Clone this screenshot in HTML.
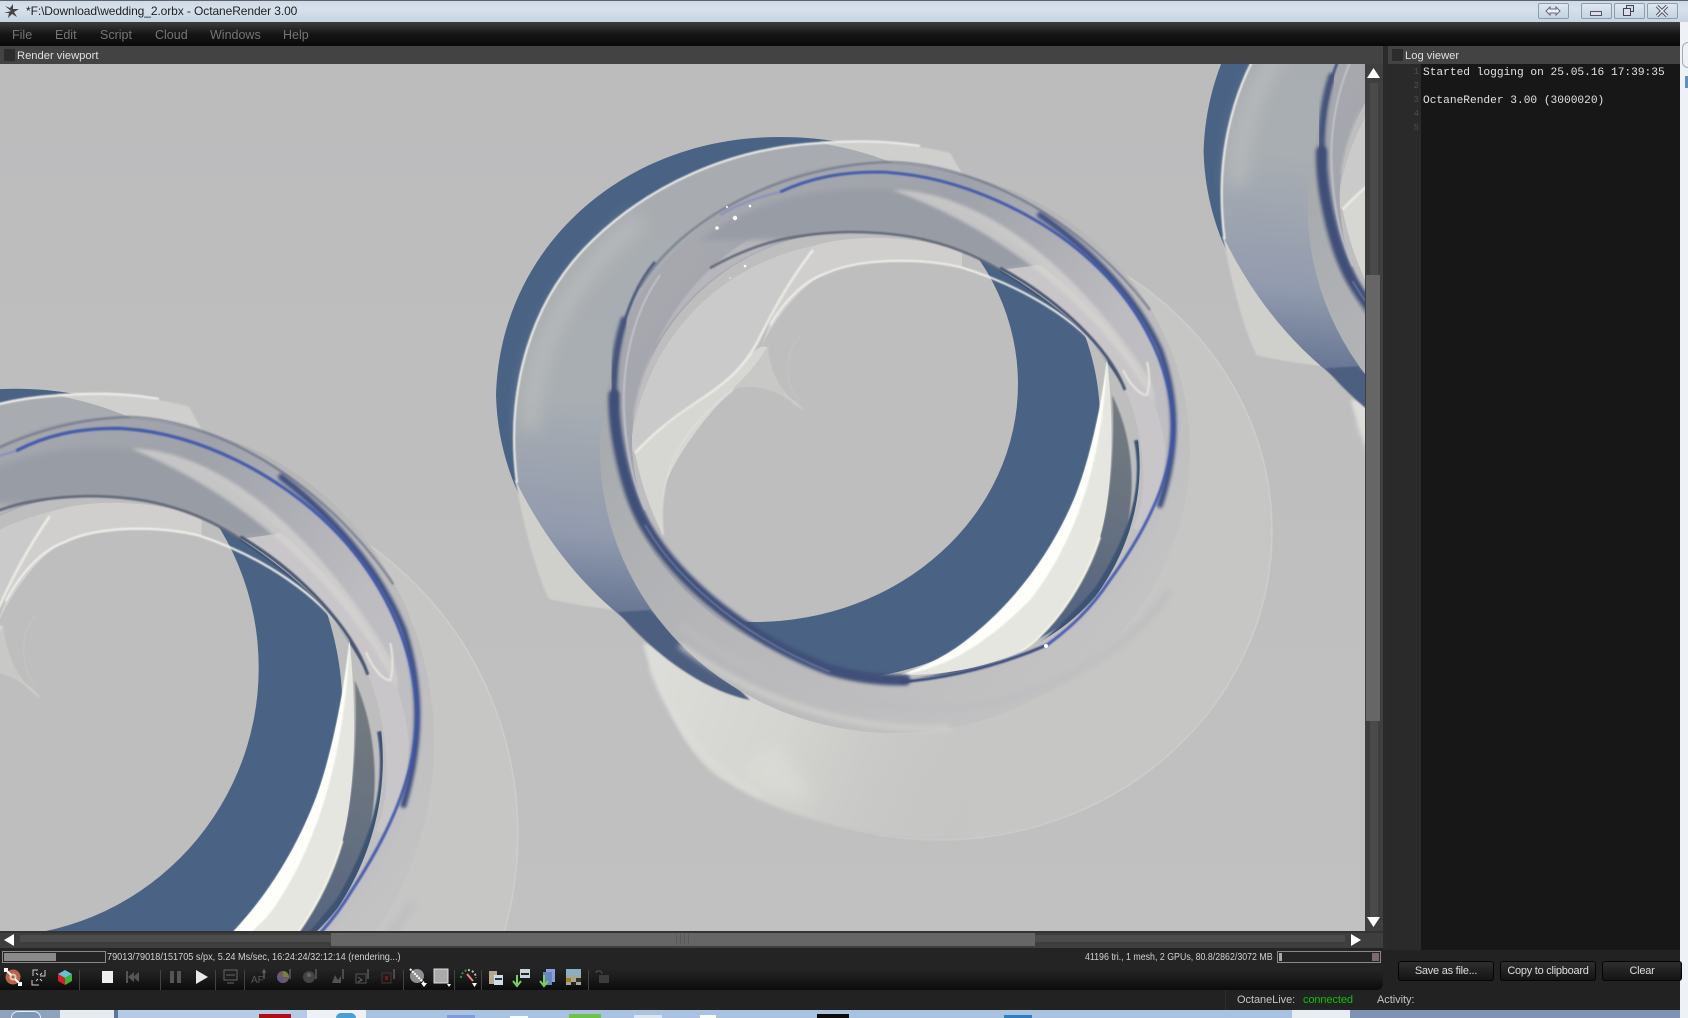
<!DOCTYPE html>
<html><head><meta charset="utf-8"><title>OctaneRender 3.00</title>
<style>
html,body{margin:0;padding:0;background:#222;overflow:hidden}
#p{position:relative;width:1688px;height:1018px;overflow:hidden;background:#222;font-family:"Liberation Sans",sans-serif}
#p div{position:absolute;white-space:nowrap}
.m{top:27px;font-size:12.500px;line-height:16px;color:#757575}
.wb{top:3px;height:14px;border:1px solid #8c9cac;border-radius:2px;background:linear-gradient(#dfe8f0,#c4d2e0)}
.btn{top:961px;height:18px;line-height:18px;border:1px solid #050505;border-radius:3px;background:linear-gradient(#2e2e2e,#141414);color:#ddd;font-size:11px;letter-spacing:-.25px;text-align:center}
.ln{left:1400px;width:19px;text-align:right;font:9px/12px "Liberation Mono",monospace;color:#4e4e4e}
.lt{left:1423px;font:11.200px/15px "Liberation Mono",monospace;color:#e2e2e2}
.sep{top:970px;width:1px;height:20px;background:#444}
.tb{top:1010px;height:8px}
</style></head><body><div id="p">

<div style="left:0;top:0;width:1688px;height:22px;background:linear-gradient(#cfdae6,#d6e1ec 40%,#c6d3e1);border-top:1px solid #5a6570;box-sizing:border-box"></div>
<svg style="position:absolute;left:3px;top:3px" width="17" height="17" viewBox="0 0 17 17"><path d="M8 8 L2 3 L7 5 L10 1 L10 6 L16 6 L11 9 L14 14 L9 11 L5 15 L6 10 L1 10Z" fill="#444"/></svg>
<div style="left:26px;top:3px;font-size:12px;line-height:16px;color:#222;letter-spacing:-.09px">*F:\Download\wedding_2.orbx - OctaneRender 3.00</div>
<div class="wb" style="left:1538px;width:29px"></div>
<svg style="position:absolute;left:1545px;top:5px" width="16" height="12"><path d="M1 6 5 2V4H11V2L15 6 11 10V8H5V10Z" fill="#eef" stroke="#667" stroke-width="1"/></svg>
<div class="wb" style="left:1581px;width:29px"></div>
<div style="left:1590px;top:11px;width:10px;height:3px;background:#dde;border:1px solid #556"></div>
<div class="wb" style="left:1614px;width:29px"></div>
<svg style="position:absolute;left:1622px;top:5px" width="14" height="12"><rect x="4.500" y=".5" width="7" height="6" fill="#cdd" stroke="#445"/><rect x="1.500" y="3.500" width="7" height="7" fill="#dde" stroke="#445"/></svg>
<div class="wb" style="left:1647px;width:29px"></div>
<svg style="position:absolute;left:1655px;top:5px" width="14" height="12"><path d="M2 1 12 11M12 1 2 11" stroke="#556" stroke-width="3.500"/><path d="M2 1 12 11M12 1 2 11" stroke="#e8eef4" stroke-width="1.500"/></svg>

<div style="left:0;top:22px;width:1680px;height:24px;background:linear-gradient(#3c3c3c,#161616 50%,#0a0a0a)"></div>
<div class="m" style="left:12px">File</div><div class="m" style="left:55px">Edit</div><div class="m" style="left:100px">Script</div><div class="m" style="left:155px">Cloud</div><div class="m" style="left:210px">Windows</div><div class="m" style="left:283px">Help</div>
<div style="left:1680px;top:22px;width:8px;height:996px;background:#eef2f6"></div>
<div style="left:1682px;top:42px;width:5px;height:24px;border:1px solid #aab;border-right:0;border-radius:10px 0 0 10px"></div>
<div style="left:1685px;top:76px;width:3px;height:12px;background:#5d8fc9"></div>

<div style="left:0;top:46px;width:1383px;height:18px;background:#434343"></div>
<div style="left:4px;top:49px;width:11px;height:12px;background:#2c2c2c"></div>
<div style="left:17px;top:48px;font-size:11.200px;line-height:16px;color:#e0e0e0">Render viewport</div>

<svg style="position:absolute;left:0;top:64px" width="1365" height="867" viewBox="0 64 1365 867">
<defs>
<linearGradient id="bg" x1="0" y1="0" x2="0" y2="1"><stop offset="0" stop-color="#bcbcbd"/><stop offset="1" stop-color="#c1c1c1"/></linearGradient>
<linearGradient id="df" gradientUnits="userSpaceOnUse" x1="700" y1="0" x2="1000" y2="0"><stop offset="0" stop-color="#c6c6c5" stop-opacity="0"/><stop offset="1" stop-color="#c6c6c5"/></linearGradient>
<linearGradient id="ds" gradientUnits="userSpaceOnUse" x1="760" y1="0" x2="1100" y2="0"><stop offset="0" stop-color="#cfcfcd" stop-opacity="0"/><stop offset="1" stop-color="#cdcdcb"/></linearGradient>
<linearGradient id="gc" gradientUnits="userSpaceOnUse" x1="640" y1="160" x2="600" y2="640"><stop offset="0" stop-color="#a8acb0"/><stop offset=".5" stop-color="#a9aeb2"/><stop offset=".78" stop-color="#929bae"/><stop offset="1" stop-color="#58698b"/></linearGradient>
<linearGradient id="bd" gradientUnits="userSpaceOnUse" x1="600" y1="300" x2="1100" y2="720"><stop offset="0" stop-color="#a2a7a9"/><stop offset=".45" stop-color="#b6b6b9"/><stop offset="1" stop-color="#c6c5c5"/></linearGradient>
<linearGradient id="wl" gradientUnits="userSpaceOnUse" x1="620" y1="220" x2="1170" y2="600"><stop offset="0" stop-color="#a9aab0"/><stop offset=".4" stop-color="#9fa2aa"/><stop offset=".7" stop-color="#bdbcc0"/><stop offset="1" stop-color="#c2c1c4"/></linearGradient>
<linearGradient id="sk" gradientUnits="userSpaceOnUse" x1="670" y1="660" x2="1000" y2="790"><stop offset="0" stop-color="#dcdcd8"/><stop offset=".4" stop-color="#d3d3cf"/><stop offset="1" stop-color="#c6c6c5" stop-opacity="0"/></linearGradient>
<linearGradient id="db" gradientUnits="userSpaceOnUse" x1="1130" y1="400" x2="1000" y2="670"><stop offset="0" stop-color="#767c7e"/><stop offset=".5" stop-color="#616d80"/><stop offset="1" stop-color="#465a80"/></linearGradient>
<filter id="b1" x="-20%" y="-20%" width="140%" height="140%"><feGaussianBlur stdDeviation=".7"/></filter>
<filter id="b2" x="-20%" y="-20%" width="140%" height="140%"><feGaussianBlur stdDeviation="1.500"/></filter>
<filter id="b3" x="-20%" y="-20%" width="140%" height="140%"><feGaussianBlur stdDeviation="3"/></filter>
<filter id="b8" x="-30%" y="-30%" width="160%" height="160%"><feGaussianBlur stdDeviation="8"/></filter>
<clipPath id="op"><path d="M632 440C632 360 690 270 790 240 860 222 940 235 1000 270 1060 305 1110 350 1125 390 1150 450 1145 530 1095 597 1050 650 970 680 895 678 810 676 730 625 680 570 650 535 632 490 632 440Z"/></clipPath>
<g id="ring">
 <ellipse cx="939" cy="531" rx="333" ry="309" fill="url(#df)" stroke="url(#ds)" stroke-width="1.500"/>
 <path d="M643 644C650 670 660 695 669 710 685 745 705 770 725 781 780 815 850 835 935 838 1000 800 1040 760 1060 720L900 640Z" fill="url(#sk)" filter="url(#b2)"/>
 <path d="M650 665C670 715 700 765 760 795" fill="none" stroke="#dededa" stroke-width="3" filter="url(#b3)"/>
 <path d="M740 770C760 790 790 800 815 800 800 780 790 760 775 745Z" fill="#dedeD9" opacity=".6" filter="url(#b8)"/>
 <path d="M496 395C500 250 620 137 780 137 960 137 1100 270 1100 420 1100 590 960 680 830 680 660 680 500 560 496 395Z" fill="#4a6284"/>
 <path d="M820 142C870 140 920 145 950 153L972 190 880 170Z" fill="#cfcfcd" filter="url(#b1)"/>
 <path d="M515 480C525 530 535 570 549 599 580 606 610 610 640 612L600 500Z" fill="#cfcfcc" filter="url(#b1)"/>
 <path d="M517 483C505 390 530 300 593 240 650 185 730 148 820 143 860 150 890 160 920 175L800 400 670 650C600 610 550 550 517 483Z" fill="url(#gc)"/>
 <path d="M530 430C530 340 580 270 640 220" fill="none" stroke="#bcbebd" stroke-width="18" opacity=".7" filter="url(#b8)"/>
 <path d="M517 483C505 390 530 300 593 240 650 185 730 148 820 143 850 141 880 140 920 146" fill="none" stroke="#ecece8" stroke-width="2.200" filter="url(#b1)"/>
 <path d="M618 612L650 610C690 650 720 670 750 700 700 690 650 650 618 612Z" fill="#4e5f80" filter="url(#b1)"/>
 <ellipse cx="895" cy="450" rx="295" ry="283" fill="url(#bd)"/>
 <path d="M680 625C760 685 860 712 960 708 1050 698 1130 650 1170 590" fill="none" stroke="#bcbcbf" stroke-width="9" opacity=".6" filter="url(#b3)"/>
 <path d="M680 645C760 705 860 732 950 728" fill="none" stroke="#d0d0cc" stroke-width="5" filter="url(#b3)"/>
 <path d="M607 400C612 300 690 210 800 172 880 150 990 165 1070 230 1140 290 1178 360 1176 440 1174 540 1100 640 990 670 900 690 790 670 720 620 650 570 605 490 607 400Z" fill="url(#wl)"/>
 <path d="M640 400C650 330 700 260 775 225L790 240C690 270 640 350 632 420Z" fill="#b7b6bb" filter="url(#b1)"/>
 <path d="M700 240C760 195 830 185 890 190 950 198 1000 230 1040 265L1000 270C950 240 860 222 790 240Z" fill="#989ca5" filter="url(#b3)"/>
 <path d="M1040 265C1100 310 1160 380 1165 450 1165 510 1140 540 1133 527 1150 500 1145 430 1125 390 1110 350 1060 305 1000 270Z" fill="#c8c6c9"/>
 <path d="M893 190C960 190 1060 240 1150 380 1157 400 1155 410 1150 395 1090 300 1000 230 893 190Z" fill="#d8d6d3" opacity=".7" filter="url(#b2)"/>
 <path d="M1123 370C1130 385 1140 395 1147 395 1150 385 1150 375 1147 362" fill="none" stroke="#e6e6de" stroke-width="2" filter="url(#b1)"/>
 <g clip-path="url(#op)">
  <rect x="600" y="200" width="600" height="500" fill="#bebebf"/>
  <path d="M496 395C500 250 620 137 780 137 960 137 1100 270 1100 420 1100 590 960 680 830 680 660 680 500 560 496 395Z" fill="#4a6284"/>
  <ellipse cx="755" cy="384" rx="263" ry="238" fill="#bebebf"/>
  <path d="M985 258C1040 275 1100 320 1130 395L1107 362C1080 320 1030 290 985 262Z" fill="#3f4f6e" filter="url(#b1)"/>
  <path d="M1112 395C1125 420 1150 490 1110 580 1080 625 1000 670 890 682 960 675 990 665 1020 653 1060 625 1088 575 1100 537 1112 495 1115 430 1112 395Z" fill="url(#db)" filter="url(#b1)"/>
  <path d="M1137 440C1147 490 1130 540 1097 590 1075 615 1060 630 1040 647" fill="none" stroke="#3d5272" stroke-width="6" filter="url(#b1)"/>
  <path d="M630 450C640 360 700 270 813 246 790 280 777 303 757 343 745 365 730 380 700 400 670 420 650 435 635 453Z" fill="#cbcaca"/>
  <path d="M813 246C860 232 920 238 962 250L962 267C920 258 860 258 827 273 800 285 775 320 762 345 775 305 790 280 813 246Z" fill="#d0cfcd"/>
  <path d="M635 453C660 425 700 405 730 377 745 362 757 343 767 347 760 365 745 380 733 390 710 410 680 450 667 480 660 500 660 520 663 535 650 510 640 480 635 453Z" fill="#d6d6d2"/>
  <path d="M635 453C655 432 670 420 700 400 730 380 745 365 757 343 777 303 790 280 813 250" fill="none" stroke="#ecece5" stroke-width="2.500" filter="url(#b1)"/>
  <path d="M663 535C658 490 670 455 697 423 710 408 722 398 733 390" fill="none" stroke="#dededa" stroke-width="1.600" filter="url(#b1)"/>
  <path d="M733 388C750 383 778 385 803 410M767 347C768 370 780 395 800 407" fill="none" stroke="#d2d2c9" stroke-width="1.200" filter="url(#b1)"/>
  <path d="M767 347C768 370 780 395 790 400 770 385 750 385 733 388 745 378 760 360 767 347Z" fill="#c8c8c6"/>
  <path d="M800 337C785 350 782 385 800 400" fill="none" stroke="#c4c4c4" stroke-width="1"/>
  <path d="M770 325C785 300 805 280 827 273 860 258 920 258 960 267 1020 285 1080 320 1107 360" fill="none" stroke="#efefea" stroke-width="2" filter="url(#b1)"/>
  <path d="M1107 358C1103 400 1090 460 1075 497 1055 545 1020 600 963 643 940 660 920 668 900 675 950 676 990 665 1020 653 1060 625 1088 575 1100 537 1112 495 1115 430 1107 358Z" fill="#e6e6e0"/>
  <path d="M1107 358C1103 400 1090 460 1075 497 1055 545 1020 600 963 643 940 660 920 668 900 675 950 668 990 640 1030 600 1070 550 1103 470 1107 358Z" fill="#fefefa" filter="url(#b1)"/>
  <path d="M1100 537C1088 575 1060 625 1020 653" fill="none" stroke="#f6f6e6" stroke-width="2" filter="url(#b1)"/>
 </g>
 <path d="M710 268C760 240 800 233 850 232 900 232 950 240 1000 270" fill="none" stroke="#656a7a" stroke-width="2.500" filter="url(#b1)"/>
 <path d="M1000 268C1060 300 1110 350 1125 390" fill="none" stroke="#4a5670" stroke-width="3" filter="url(#b1)"/>
 <path d="M655 262C632 290 618 330 614 380" fill="none" stroke="#4f5c80" stroke-width="3" filter="url(#b1)"/>
 <path d="M624 320C616 345 613 370 614 405" fill="none" stroke="#46557c" stroke-width="7" stroke-linecap="round" filter="url(#b2)"/>
 <path d="M614 395C613 430 625 490 645 525 680 585 750 640 830 670 860 678 880 680 905 680" fill="none" stroke="#3f4f78" stroke-width="11" stroke-linecap="round" filter="url(#b2)"/>
 <path d="M660 275C635 310 622 360 624 410 626 450 632 480 645 510" fill="none" stroke="#c8c8d4" stroke-width="1.500" filter="url(#b1)"/>
 <path d="M645 525C680 585 750 640 830 672" fill="none" stroke="#6b7aa0" stroke-width="1.500" filter="url(#b1)"/>
 <path d="M640 287C680 220 780 165 890 162 990 165 1090 230 1150 310" fill="none" stroke="#6f7689" stroke-width="2.500" opacity=".7" filter="url(#b1)"/>
 <path d="M1040 215C1090 250 1135 295 1160 350 1178 400 1178 450 1160 505" fill="none" stroke="#3f5080" stroke-width="6" stroke-linecap="round" filter="url(#b2)"/>
 <path d="M780 192C810 178 840 172 880 172 960 175 1040 215 1090 260 1135 300 1170 360 1173 420 1175 470 1150 525 1110 580 1090 610 1070 628 1047 645" fill="none" stroke="#3e55ab" stroke-width="3" opacity=".9" filter="url(#b1)"/>
 <path d="M720 215C740 203 760 197 780 192" fill="none" stroke="#8a8fc0" stroke-width="2" filter="url(#b1)"/>
 <path d="M1047 645C1000 665 950 678 900 682" fill="none" stroke="#3c4b7c" stroke-width="3" filter="url(#b1)"/>
 <circle cx="735" cy="218" r="2.200" fill="#fff"/><circle cx="717" cy="228" r="1.800" fill="#fff"/><circle cx="750" cy="206" r="1.300" fill="#fff"/><circle cx="727" cy="207" r="1" fill="#fff"/><circle cx="745" cy="266" r="1.300" fill="#fff"/><circle cx="730" cy="278" r="1" fill="#dde"/><circle cx="1046" cy="646" r="2" fill="#fff"/>
</g>
</defs>
<rect x="0" y="64" width="1365" height="867" fill="url(#bg)"/>
<use href="#ring" transform="translate(707.600 -243.700)"/>
<use href="#ring" transform="translate(349.500 638.500) scale(1.020 1.130) translate(-1107 -358)"/>
<use href="#ring"/>
</svg>

<div style="left:1365px;top:64px;width:18px;height:867px;background:#3f3f3f"></div>
<div style="left:1370px;top:83px;width:8px;height:835px;background:#4a4a4a"></div>
<div style="left:1366px;top:275px;width:14px;height:446px;background:#666"></div>
<svg style="position:absolute;left:1366px;top:67px" width="15" height="12"><path d="M7.500 1 14 11H1Z" fill="#fff"/></svg>
<svg style="position:absolute;left:1366px;top:916px" width="15" height="12"><path d="M7.500 11 14 1H1Z" fill="#fff"/></svg>

<div style="left:0;top:931px;width:1383px;height:17px;background:#3e3e3e;border-top:2px solid #333;box-sizing:border-box"></div>
<div style="left:20px;top:935px;width:1325px;height:7px;background:#4c4c4c"></div>
<div style="left:331px;top:933px;width:704px;height:13px;background:#666"></div>
<svg style="position:absolute;left:3px;top:933px" width="12" height="14"><path d="M1 7 11 1V13Z" fill="#fff"/></svg>
<svg style="position:absolute;left:1350px;top:933px" width="12" height="14"><path d="M11 7 1 1V13Z" fill="#fff"/></svg>
<div style="left:676px;top:934px;width:14px;height:11px;background:repeating-linear-gradient(90deg,#5a5a5a 0 1px,#666 1px 4px)"></div>

<div style="left:0;top:948px;width:1383px;height:42px;background:linear-gradient(#242424 0,#242424 48%,#1c1c1c 70%,#0b0b0b 100%);border-radius:0 0 6px 0"></div>
<div style="left:2px;top:951px;width:102px;height:10px;border:1px solid #8a8a8a;background:#242424"></div>
<div style="left:4px;top:953px;width:52px;height:8px;background:#8a8a8a"></div>
<div style="left:107px;top:950px;font-size:10.500px;line-height:14px;color:#d2d2d2;transform:scaleX(.87);transform-origin:0 0">79013/79018/151705 s/px, 5.24 Ms/sec, 16:24:24/32:12:14 (rendering...)</div>
<div style="left:1085px;top:950px;font-size:10.500px;line-height:14px;color:#d2d2d2;transform:scaleX(.84);transform-origin:0 0">41196 tri., 1 mesh, 2 GPUs, 80.8/2862/3072 MB</div>
<div style="left:1277px;top:951px;width:102px;height:10px;border:1px solid #8a8a8a"></div>
<div style="left:1279px;top:953px;width:3px;height:8px;background:#aaa"></div>
<div style="left:1372px;top:953px;width:7px;height:8px;background:#7b6a70"></div>

<div class="sep" style="left:79px"></div><div class="sep" style="left:160px"></div><div class="sep" style="left:215px"></div><div class="sep" style="left:244px"></div><div class="sep" style="left:403px"></div><div class="sep" style="left:454px"></div><div class="sep" style="left:481px"></div><div class="sep" style="left:588px"></div>

<svg style="position:absolute;left:0;top:964px" width="630" height="26" viewBox="0 0 630 26">
 <circle cx="13" cy="13" r="7.500" fill="#b8654a"/><circle cx="13" cy="13" r="3.500" fill="#e0c8b8"/><circle cx="13" cy="13" r="1.500" fill="#a85a44"/><path d="M6 6 11 11M20 20 15 15M8 5H5V8M18 21H21V18" stroke="#fff" stroke-width="2" fill="none"/>
 <path d="M33 12V6H38M45 6V12H40M32 16V21H39" stroke="#ccc" fill="none"/><path d="M36 9 38 11M42 9 40 11M36 17 38 15M42 17 40 15" stroke="#ccc"/>
 <path d="M65 6 72 10 65 14 58 10Z" fill="#6ac0d0"/><path d="M58 10 65 14V21L58 17Z" fill="#d02020"/><path d="M72 10 65 14V21L72 17Z" fill="#40b040"/>
 <rect x="102" y="7" width="11" height="12" fill="#eee"/>
 <path d="M127 7V19" stroke="#555" stroke-width="2"/><path d="M139 8 133 13 139 18ZM134 8 128 13 134 18Z" fill="#555"/>
 <rect x="170" y="7" width="4" height="12" fill="#555"/><rect x="177" y="7" width="4" height="12" fill="#555"/>
 <path d="M196 6 208 13 196 20Z" fill="#e8e8e8"/>
 <rect x="224" y="6" width="13" height="10" fill="none" stroke="#666"/><path d="M227 19H234M226 11H235" stroke="#666"/>
 <text x="251" y="19" font-family="Liberation Sans,sans-serif" font-size="10" fill="#555">AF</text><path d="M264 5V15" stroke="#777"/><path d="M262 8H266" stroke="#777"/>
 <circle cx="283" cy="13" r="6" fill="#6e5a66"/><path d="M283 13V7A6 6 0 0 1 289 13Z" fill="#7a8040"/><path d="M283 13H277A6 6 0 0 0 283 19Z" fill="#5a5a80"/><path d="M290 5V15" stroke="#777"/>
 <circle cx="309" cy="13" r="6" fill="#444"/><circle cx="309" cy="11" r="2" fill="#666"/><path d="M316 5V15" stroke="#777"/>
 <path d="M332 19 335 11 338 16 341 12V19Z" fill="#5a5050"/><path d="M343 5V15" stroke="#777"/>
 <path d="M356 10H366V19H356Z" fill="none" stroke="#555"/><path d="M358 13 362 16 358 18" stroke="#666" fill="none"/><path d="M368 5V15" stroke="#777"/>
 <rect x="382" y="9" width="9" height="10" fill="none" stroke="#553030"/><rect x="385" y="12" width="3" height="4" fill="#6a2020"/><path d="M394 5V15" stroke="#777"/>
 <circle cx="417" cy="12" r="7" fill="#8c8f94"/><path d="M410 5 424 19" stroke="#fff" stroke-width="2" stroke-dasharray="2 1"/><path d="M421 19 427 19 424 23Z" fill="#fff"/>
 <rect x="434" y="5" width="14" height="14" fill="#aaa" stroke="#ddd"/><path d="M447 20 451 20 449 23Z" fill="#fff"/>
 <path d="M461 14A8 8 0 0 1 468 6" stroke="#3d8a3d" stroke-width="2" fill="none" stroke-dasharray="2 2"/><path d="M468 6A8 8 0 0 1 476 14" stroke="#bbb" stroke-width="2" fill="none" stroke-dasharray="2 2"/><path d="M467 10 473 17" stroke="#e88" stroke-width="2"/><path d="M472 19 477 19 474.500 23Z" fill="#fff"/>
 <rect x="489" y="7" width="8" height="13" fill="#b4a890"/><rect x="494" y="11" width="9" height="10" fill="#cde"/><path d="M495 15H502" stroke="#333" stroke-width="2"/>
 <rect x="520" y="5" width="10" height="9" fill="#c8d4dc"/><path d="M521 10H529" stroke="#222" stroke-width="2"/><path d="M517 11V20M513 17 517 22 521 17" stroke="#7cd060" stroke-width="2" fill="none"/>
 <rect x="546" y="5" width="9" height="13" fill="#8aa0d8"/><rect x="543" y="8" width="9" height="13" fill="#6a84c0"/><path d="M544 11V20M540 17 544 22 548 17" stroke="#7cd060" stroke-width="2" fill="none"/>
 <rect x="566" y="5" width="15" height="16" fill="#a8a890"/><rect x="566" y="5" width="15" height="6" fill="#8ab0c8"/><rect x="566" y="14" width="5" height="4" fill="#a08020"/><rect x="571" y="18" width="5" height="3" fill="#222"/><rect x="576" y="14" width="5" height="4" fill="#333"/>
 <path d="M596 9C596 6 602 6 602 10" stroke="#555" fill="none"/><rect x="599" y="11" width="10" height="8" fill="#3c3c3c"/>
</svg>

<div style="left:1225px;top:990px;width:1px;height:20px;background:#2e2e2e"></div>
<div style="left:1237px;top:993px;font-size:11px;line-height:14px;color:#c4c4c4;letter-spacing:-.05px">OctaneLive:</div>
<div style="left:1303px;top:993px;font-size:11px;line-height:14px;color:#0fc00f;letter-spacing:-.1px">connected</div>
<div style="left:1377px;top:993px;font-size:11px;line-height:14px;color:#c4c4c4;letter-spacing:-.05px">Activity:</div>

<div style="left:1383px;top:46px;width:5px;height:904px;background:#2b2b2b"></div>
<div style="left:1388px;top:46px;width:292px;height:18px;background:#434343"></div>
<div style="left:1392px;top:49px;width:11px;height:12px;background:#2c2c2c"></div>
<div style="left:1405px;top:48px;font-size:11.200px;line-height:16px;color:#e0e0e0">Log viewer</div>
<div style="left:1388px;top:64px;width:33px;height:886px;background:#2a2a2a"></div>
<div style="left:1421px;top:64px;width:259px;height:886px;background:#171717"></div>
<div class="ln" style="top:66px">1</div><div class="ln" style="top:80px">2</div><div class="ln" style="top:94px">3</div><div class="ln" style="top:108px">4</div><div class="ln" style="top:122px">5</div>
<div class="lt" style="top:66px">Started logging on 25.05.16 17:39:35</div>
<div class="lt" style="top:94px">OctaneRender 3.00 (3000020)</div>

<div class="btn" style="left:1398px;width:94px">Save as file...</div>
<div class="btn" style="left:1500px;width:94px">Copy to clipboard</div>
<div class="btn" style="left:1602px;width:78px">Clear</div>

<div class="tb" style="left:0;width:60px;background:#8ea2b9"></div>
<div style="left:11px;top:1011px;width:30px;height:7px;box-sizing:border-box;border:1px solid #e4eef6;border-bottom:0;border-radius:15px 15px 0 0;background:#7f97b3"></div>
<div class="tb" style="left:60px;width:54px;background:#e6ebf1"></div>
<div class="tb" style="left:114px;width:4px;background:#5f7595"></div>
<div class="tb" style="left:118px;width:189px;background:#b5cae3"></div>
<div class="tb" style="left:307px;width:59px;background:#eef2f7"></div>
<div class="tb" style="left:366px;width:926px;background:#a9c2df"></div>
<div class="tb" style="left:1292px;width:58px;background:#e8edf3"></div>
<div class="tb" style="left:1350px;width:330px;background:#7f94b3"></div>
<div style="left:259px;top:1014px;width:32px;height:4px;background:#b00d18"></div>
<div style="left:336px;top:1013px;width:20px;height:5px;background:#45a0d8;border-radius:10px 10px 0 0"></div>
<div style="left:447px;top:1015px;width:28px;height:3px;background:#7f9bd8"></div>
<div style="left:510px;top:1016px;width:18px;height:2px;background:#fff"></div>
<div style="left:569px;top:1014px;width:32px;height:4px;background:#6cc24a"></div>
<div style="left:634px;top:1015px;width:28px;height:3px;background:#dfe5ee"></div>
<div style="left:700px;top:1015px;width:16px;height:3px;background:#fff"></div>
<div style="left:817px;top:1014px;width:32px;height:4px;background:#0c0c0c"></div>
<div style="left:1004px;top:1015px;width:28px;height:3px;background:#2f7fc0"></div>
</div></body></html>
